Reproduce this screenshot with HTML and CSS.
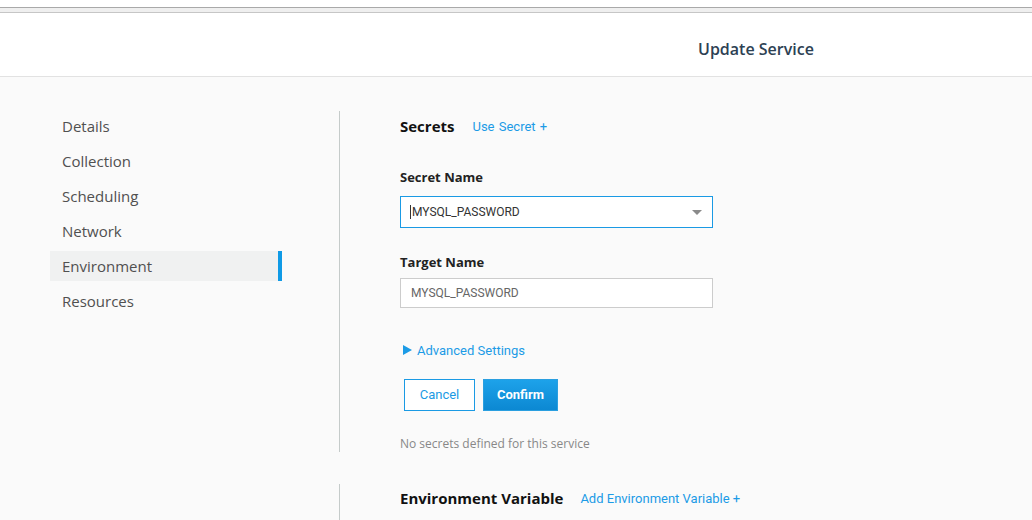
FILE: index.html
```html
<!DOCTYPE html>
<html>
<head>
<meta charset="utf-8">
<link rel="stylesheet" href="styles.css">
</head>
<body>
<div class="topstrip"></div>
<header class="header"><h1 class="title">Update Service</h1></header>
<main class="main">
  <nav class="nav">
    <div class="nav-item">Details</div>
    <div class="nav-item">Collection</div>
    <div class="nav-item">Scheduling</div>
    <div class="nav-item">Network</div>
    <div class="nav-item active">Environment</div>
    <div class="nav-item">Resources</div>
  </nav>
  <div class="content">
    <section class="section first">
      <div class="sec-head"><span class="sec-title">Secrets</span><a class="link link-wide">Use Secret +</a></div>
      <div class="label label-first">Secret Name</div>
      <div class="select"><span class="caret"></span><span class="val">MYSQL_PASSWORD</span><span class="arrow"></span></div>
      <div class="label label-second">Target Name</div>
      <div class="input">MYSQL_PASSWORD</div>
      <div class="advanced"><span class="tri"></span><span>Advanced Settings</span></div>
      <div class="buttons">
        <button class="btn btn-cancel">Cancel</button>
        <button class="btn btn-confirm">Confirm</button>
      </div>
      <div class="empty">No secrets defined for this service</div>
    </section>
    <section class="section second">
      <div class="sec-head"><span class="sec-title">Environment Variable</span><a class="link link-env">Add Environment Variable +</a></div>
    </section>
  </div>
</main>
</body>
</html>
```
FILE: styles.css
```css
html, body { margin: 0; padding: 0; }
body {
  background: #fafafa;
  font-family: "Open Sans", "Noto Sans", sans-serif;
  width: 1032px;
  height: 520px;
  overflow: hidden;
}
.topstrip {
  height: 7px;
  background: #fff;
  border-bottom: 1px solid #a9a9a9;
}
.header {
  box-sizing: border-box;
  height: 69px;
  padding-top: 5px;
  background: linear-gradient(#efefef 0, #efefef 4px, #c6c6c6 4px, #c6c6c6 5px, #fff 5px);
  border-bottom: 1px solid #e2e2e2;
}
.title {
  margin: 0;
  padding: 25px 0 0 698px;
  font-size: 16px;
  line-height: 22px;
  font-weight: 600;
  color: #2d4153;
}
.main {
  display: flex;
  padding-top: 34px;
}
.nav {
  margin-left: 50px;
  width: 232px;
  display: flex;
  flex-direction: column;
  gap: 5px;
}
.nav-item {
  height: 30px;
  line-height: 30px;
  padding-left: 12px;
  font-size: 15px;
  color: #505050;
  border-right: 4px solid transparent;
}
.nav-item.active {
  background: #f0f1f1;
  border-right-color: #0f9ae6;
}
.content {
  margin-left: 57px;
  display: flex;
  flex-direction: column;
}
.section {
  border-left: 1px solid #c5cbca;
  padding-left: 60px;
}
.section.first {
  height: 341px;
  box-sizing: border-box;
  padding-top: 5px;
}
.section.second {
  margin-top: 32px;
  padding-top: 4px;
  height: 60px;
}
.sec-head {
  display: flex;
  align-items: center;
  height: 20px;
}
.sec-title {
  font-size: 15px;
  font-weight: 700;
  color: #111;
}
.link {
  font-family: Roboto, "Liberation Sans", sans-serif;
  font-size: 13px;
  color: #1c9be6;
  margin-left: 18px;
}
.link-wide {
  word-spacing: 1px;
}
.link-env {
  margin-left: 17px;
}
.label {
  font-size: 13px;
  font-weight: 700;
  color: #222;
  line-height: 18px;
}
.label-first { margin-top: 32px; }
.label-second { margin-top: 25px; }
.select {
  margin-top: 10px;
  width: 313px;
  height: 32px;
  box-sizing: border-box;
  border: 1px solid #1a9ae4;
  background: #fff;
  display: flex;
  align-items: center;
  padding-left: 9px;
  position: relative;
  font-family: Roboto, "Liberation Sans", sans-serif;
  font-size: 12px;
  color: #333;
}
.caret {
  width: 1px;
  height: 14px;
  background: #333;
}
.val { margin-left: 1px; }
.arrow {
  position: absolute;
  right: 10px;
  top: 13px;
  width: 0;
  height: 0;
  border-left: 5px solid transparent;
  border-right: 5px solid transparent;
  border-top: 5px solid #8a8a8a;
}
.input {
  margin-top: 7px;
  width: 313px;
  height: 30px;
  box-sizing: border-box;
  border: 1px solid #cccccc;
  background: #fff;
  padding-left: 10px;
  line-height: 28px;
  font-family: Roboto, "Liberation Sans", sans-serif;
  font-size: 12px;
  color: #666;
}
.advanced {
  margin-top: 32px;
  height: 20px;
  display: flex;
  align-items: center;
  padding-left: 3px;
  font-family: Roboto, "Liberation Sans", sans-serif;
  font-size: 13px;
  color: #1c9be6;
}
.tri {
  width: 0;
  height: 0;
  border-top: 5px solid transparent;
  border-bottom: 5px solid transparent;
  border-left: 9px solid #1c9be6;
  margin-right: 5px;
}
.buttons {
  margin-top: 19px;
  padding-left: 4px;
  display: flex;
  gap: 8px;
}
.btn {
  height: 32px;
  box-sizing: border-box;
  font-family: Roboto, "Liberation Sans", sans-serif;
  font-size: 13px;
  padding: 0 0 1px;
  margin: 0;
  cursor: pointer;
}
.btn-cancel {
  width: 71px;
  background: #fff;
  border: 1px solid #1a9ae4;
  color: #1a9ae4;
}
.btn-confirm {
  width: 75px;
  border: 1px solid #2a9fe0;
  background: linear-gradient(#1da2ea, #0c88d2);
  color: #fff;
  font-weight: 700;
}
.empty {
  margin-top: 25px;
  font-size: 12px;
  line-height: 16px;
  color: #888;
}
```
